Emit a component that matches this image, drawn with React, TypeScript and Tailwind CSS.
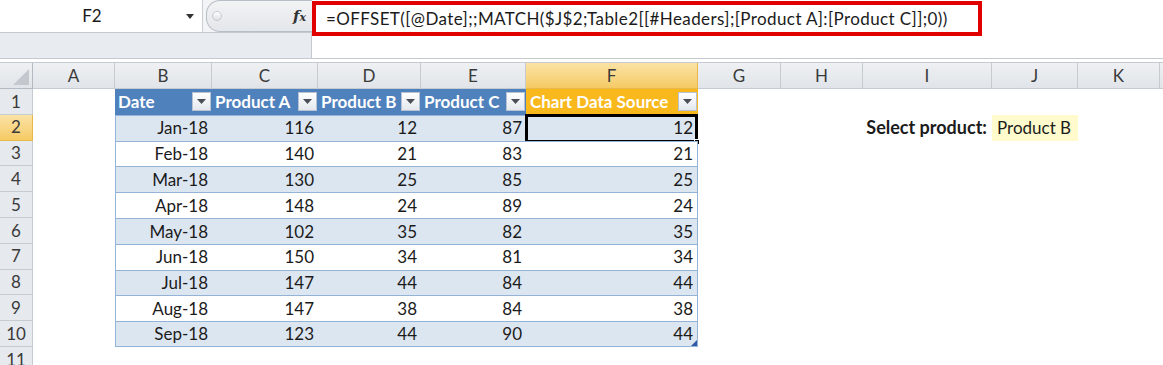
import React from "react"

const cols = ["A", "B", "C", "D", "E", "F", "G", "H", "I", "J", "K"]

const rows = [
  ["Jan-18", 116, 12, 87, 12],
  ["Feb-18", 140, 21, 83, 21],
  ["Mar-18", 130, 25, 85, 25],
  ["Apr-18", 148, 24, 89, 24],
  ["May-18", 102, 35, 82, 35],
  ["Jun-18", 150, 34, 81, 34],
  ["Jul-18", 147, 44, 84, 44],
  ["Aug-18", 147, 38, 84, 38],
  ["Sep-18", 123, 44, 90, 44],
]

const headers = ["Date", "Product A", "Product B", "Product C", "Chart Data Source"]

function FilterButton() {
  return (
    <span className="ml-auto mr-[1px] flex h-[19px] w-[19px] shrink-0 items-center justify-center border border-[#b7c3d3] bg-gradient-to-b from-white to-[#e4e8ee]">
      <svg width="9" height="5" viewBox="0 0 9 5">
        <path d="M0 0 H9 L4.5 5 Z" fill="#4a4f57" />
      </svg>
    </span>
  )
}

export default function App() {
  return (
    <div className="h-[365px] w-[1163px] overflow-hidden bg-white font-['Lato','Open_Sans',sans-serif] text-[17px] text-[#1b1b1b]">
      {/* formula bar */}
      <div className="flex h-[58px]">
        <div className="flex w-[312px] flex-col">
          <div className="flex h-[33px] border-b border-[#c5cad1] bg-[#f3f4f6]">
            <div className="relative flex w-[203px] items-center border-r border-[#c9ced5] bg-white">
              <span className="w-[184px] text-center text-[17px]">F2</span>
              <svg width="8" height="5" viewBox="0 0 8 5" className="ml-[2px]">
                <path d="M0 0 H8 L4 5 Z" fill="#333" />
              </svg>
            </div>
            <div className="ml-[3px] flex flex-1 items-center rounded-l-[14px] border border-r-0 border-[#b8bec6] bg-gradient-to-b from-[#f2f3f5] to-[#e3e6ea]">
              <span className="ml-[5px] h-[10px] w-[10px] rounded-full border border-[#c4c9cf] bg-gradient-to-b from-white to-[#dde0e4]" />
              <span className="ml-auto mr-[6px] font-['DejaVu_Serif',serif] text-[15px] font-bold italic text-[#333]">
                f<span className="text-[11px]">x</span>
              </span>
            </div>
          </div>
          <div className="flex-1 border-r border-[#c5cad1] bg-[#e8ebef]" />
        </div>
        <div className="flex-1 bg-white">
          <div className="mt-[1px] flex h-[35px] w-[670px] items-center border-[4px] border-[#e00000] pl-[10px] text-[17px] tracking-[0.4px]">
            =OFFSET([@Date];;MATCH($J$2;Table2[[#Headers];[Product A]:[Product C]];0))
          </div>
        </div>
      </div>
      <div className="h-[5px] border-y border-[#c5cad1] bg-white" />

      {/* sheet */}
      <div className="grid grid-cols-[33px_82px_97px_106px_103px_105px_172px_83px_82px_129px_86px_82px_1fr] grid-rows-[26px_repeat(11,25.8px)]">
        {/* column headers */}
        <div className="flex items-end justify-end border-b border-r border-[#b4bac2] bg-gradient-to-b from-[#eef0f3] to-[#e1e5e9] p-[3px]">
          <svg width="16" height="16" viewBox="0 0 16 16">
            <path d="M16 0 V16 H0 Z" fill="#c3c8ce" />
          </svg>
        </div>
        {cols.map((c) => (
          <div
            key={c}
            className={
              c === "F"
                ? "flex items-center justify-center border-b border-r border-[#e8b84a] bg-gradient-to-b from-[#fbe3a5] to-[#f5ca62] text-[#3a3a3a]"
                : "flex items-center justify-center border-b border-r border-[#c6cbd2] bg-gradient-to-b from-[#eef0f3] to-[#e1e5e9] text-[#3a3a3a]"
            }
          >
            {c}
          </div>
        ))}
        <div className="border-b border-[#c6cbd2] bg-gradient-to-b from-[#eef0f3] to-[#e1e5e9]" />

        {/* row 1: table header */}
        <div className="flex items-center justify-center border-b border-r border-[#c6cbd2] bg-[#e6e9ed] text-[#3a3a3a]">1</div>
        <div />
        {headers.map((h, i) => (
          <div
            key={h}
            className={
              i === 4
                ? "flex items-center bg-[#f9b81c] pl-[4px] font-bold text-white"
                : "flex items-center bg-[#4f81bd] pl-[3px] font-bold text-white"
            }
          >
            <span className="whitespace-nowrap">{h}</span>
            <FilterButton />
          </div>
        ))}
        <div />
        <div />
        <div />
        <div />
        <div />
        <div />

        {/* data rows */}
        {rows.map((r, ri) => {
          const n = ri + 2
          const band = ri % 2 === 0 ? "bg-[#dce6f1]" : "bg-white"
          const last = ri === rows.length - 1
          return (
            <React.Fragment key={n}>
              <div
                className={
                  n === 2
                    ? "flex items-center justify-center border-b border-r border-[#e8b84a] bg-gradient-to-b from-[#fbe3a5] to-[#f5ca62] text-[#3a3a3a]"
                    : "flex items-center justify-center border-b border-r border-[#c6cbd2] bg-[#e6e9ed] text-[#3a3a3a]"
                }
              >
                {n}
              </div>
              <div />
              {r.map((v, ci) => (
                <div
                  key={ci}
                  className={`relative flex items-center justify-end border-t border-[#95b3d7] pr-[4px] ${band} ${ci === 0 ? "border-l" : ""} ${ci === 4 ? "border-r" : ""} ${last ? "border-b" : ""}`}
                >
                  {v}
                  {n === 2 && ci === 4 && (
                    <span className="absolute inset-x-[-1px] inset-y-[-2px] border-[3px] border-black">
                      <span className="absolute bottom-[-5px] right-[-5px] h-[6px] w-[6px] border border-white bg-black" />
                    </span>
                  )}
                  {last && ci === 4 && (
                    <svg width="6" height="6" viewBox="0 0 6 6" className="absolute bottom-0 right-0">
                      <path d="M6 0 V6 H0 Z" fill="#2f5aa8" />
                    </svg>
                  )}
                </div>
              ))}
              <div />
              <div />
              {n === 2 ? (
                <>
                  <div className="flex items-center justify-end pr-[5px] text-[18px] font-bold whitespace-nowrap">Select product:</div>
                  <div className="flex items-center bg-[#fffbcc] pl-[5px] whitespace-nowrap">Product B</div>
                </>
              ) : (
                <>
                  <div />
                  <div />
                </>
              )}
              <div />
              <div />
            </React.Fragment>
          )
        })}

        {/* row 11 */}
        <div className="flex items-center justify-center border-b border-r border-[#c6cbd2] bg-[#e6e9ed] text-[#3a3a3a]">11</div>
      </div>
    </div>
  )
}
